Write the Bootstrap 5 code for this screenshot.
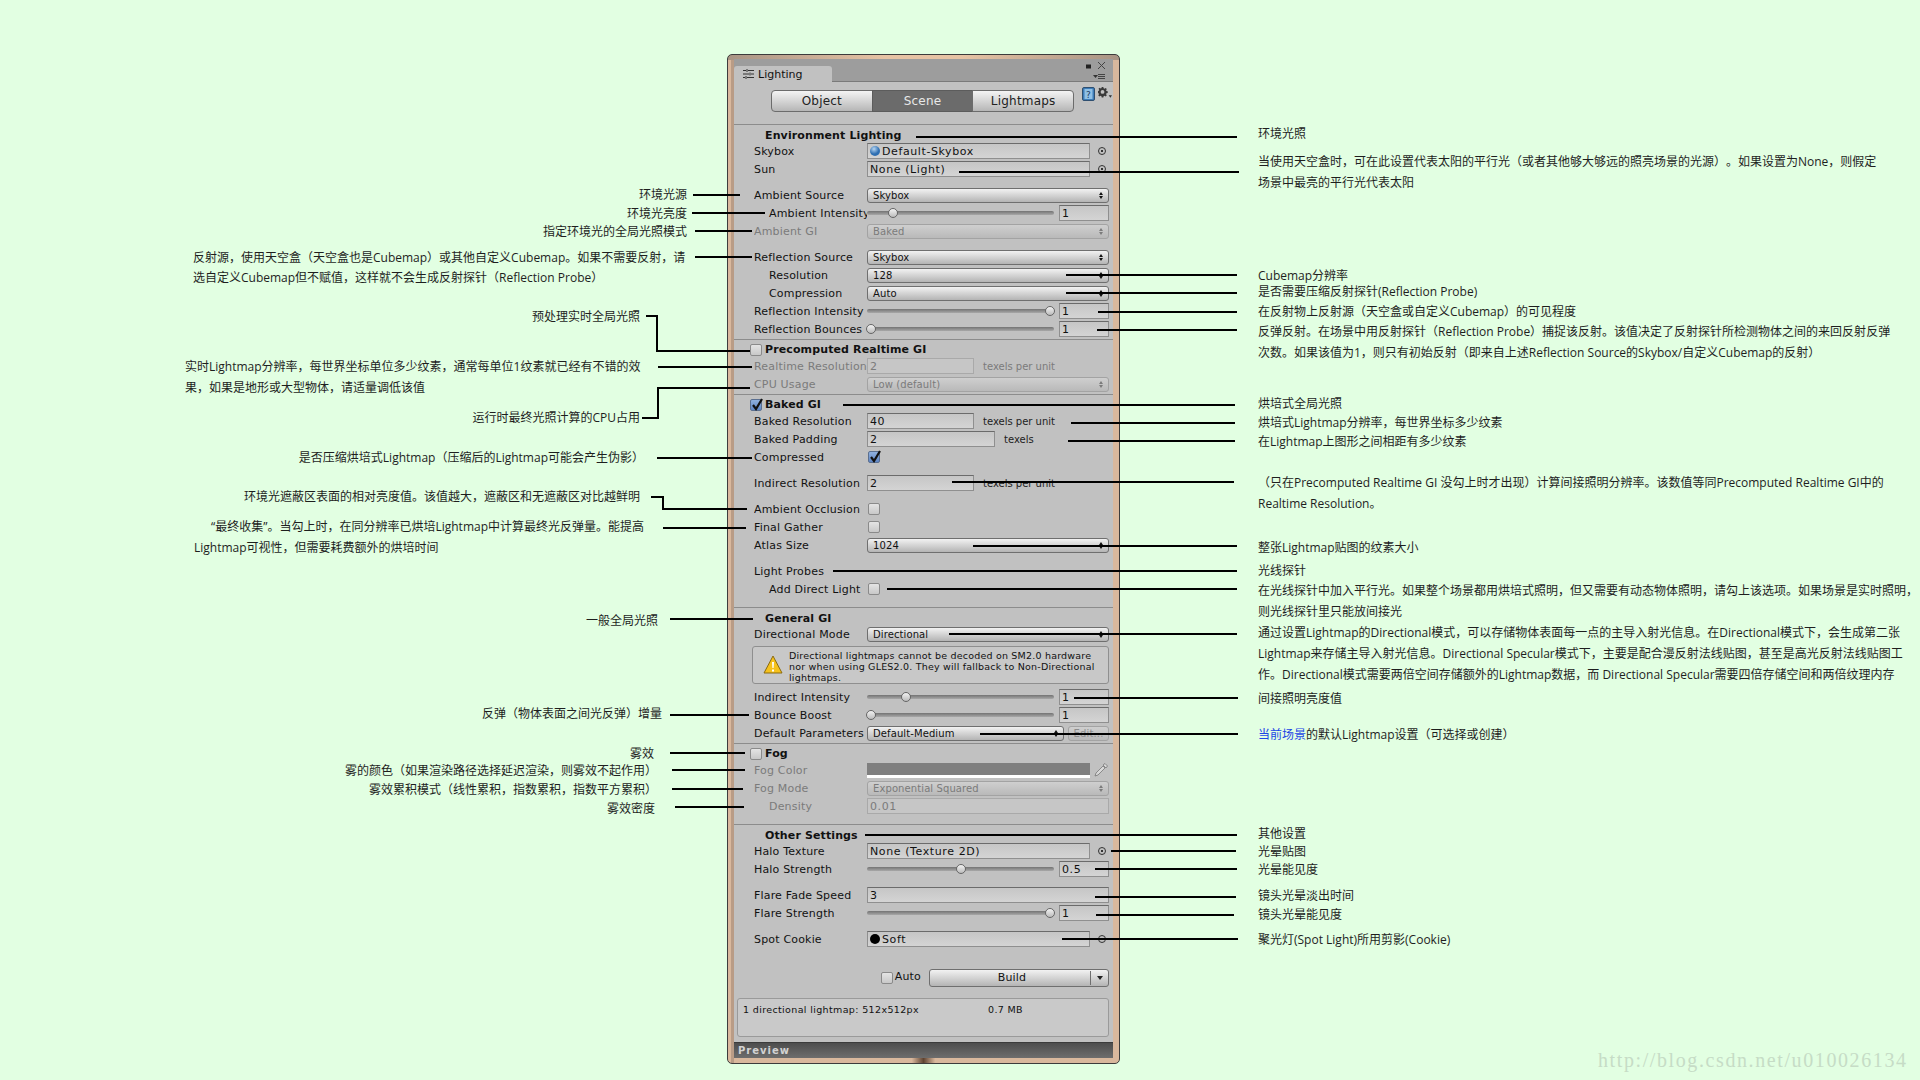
<!DOCTYPE html>
<html lang="zh">
<head>
<meta charset="utf-8">
<title>Lighting</title>
<link href="https://cdn.jsdelivr.net/npm/bootstrap@5.3.3/dist/css/bootstrap.min.css" rel="stylesheet">
<script src="https://cdn.jsdelivr.net/npm/bootstrap@5.3.3/dist/js/bootstrap.bundle.min.js"></script>
<style>
    html, body { height: 1080px; overflow: hidden; }
    body { background-color: #e2ffe2; font-family: "DejaVu Sans", sans-serif; color: #111; }
    .canvas { position: relative; width: 1920px; height: 1080px; padding: 54px 0 0 727px; }

    /* window */
    .lit-frame {
        width: 393px; height: 1010px; padding: 4px 7px 6px 7px;
        border: 1px solid #3c3c3c; border-radius: 5px;
        background:
            linear-gradient(90deg, transparent 47%, #5f4432 50%, transparent 53%) no-repeat bottom / 100% 5px,
            linear-gradient(90deg, #a89484, #e6c3a4 40%, #e6c3a4 60%, #a89484) no-repeat top / 100% 5px,
            linear-gradient(90deg, #d9b89d 0 3px, #b99c86 3px 6px, #d9b89d 6px);
    }
    .lit-panel { height: 999px; background: #c1c1c1; font-size: 11px; letter-spacing: .18px; white-space: nowrap; margin-left: -1px; margin-right: -1px; }
    .lit-tabbar { height: 23px; background: #9d9d9d; border-bottom: 1px solid #7a7a7a; padding-top: 7px; position: relative; }
    .lit-tab { width: 98px; height: 16px; background: #c1c1c1; border-radius: 3px 3px 0 0; gap: 4px; padding-left: 9px; line-height: 15px; letter-spacing: 0; }
    .win-ctrl { position: absolute; top: 2px; right: 4px; }
    .lit-toolbar { padding: 8px 0 0 37px; height: 42px; }
    .lit-toolbar .btn-group { width: 303px; height: 22px; }
    .lit-toolbar .btn {
        flex: 1 1 0; font-size: 12px; line-height: 20px; padding: 0; color: #222; letter-spacing: .2px;
        background: linear-gradient(#f4f4f4, #b6b6b6); border-color: #6c6c6c; border-radius: 4px;
    }
    .lit-toolbar .btn.on { background: #6b6b6b; color: #e8e8e8; border-color: #5c5c5c; }
    .tool-icons { margin: -3px 0 0 8px; gap: 3px; height: 15px; }
    .sep { height: 1px; background: #8c8c8c; margin-top: 1px; }
    .sep-gap { margin-top: 9px; }
    .head { height: 14px; line-height: 14px; font-weight: 700; padding: 1px 0 0 31px; margin-top: 3px; letter-spacing: .12px; }
    .head.chk { padding: 0 0 0 16px; gap: 3px; }
    .rw { height: 18px; padding: 0 4px 0 20px; }
    .rw-gap { margin-top: 8px; }
    .lbl { width: 113px; flex: none; overflow: hidden; padding-top: 2px; }
    .ind { padding-left: 15px; }
    .off { color: #7b7b7b; }

    /* widgets */
    .pop {
        flex: 1 1 0; height: 15px; line-height: 13px; font-size: 10px; letter-spacing: .1px; padding: 0 5px;
        border: 1px solid #6f6f6f; border-radius: 3px; background: linear-gradient(#f2f2f2, #b4b4b4);
    }
    .pop.off { border-color: #a3a3a3; background: linear-gradient(#cfcfcf, #b9b9b9); }
    .updown { width: 4px; height: 7px; flex: none; display: flex; flex-direction: column; gap: 1px; }
    .updown::before, .updown::after { content: ""; border-left: 2px solid transparent; border-right: 2px solid transparent; }
    .updown::before { border-bottom: 3px solid currentColor; }
    .updown::after { border-top: 3px solid currentColor; }
    .fld {
        height: 16px; line-height: 15px; padding: 0 2px; flex: none;
        border: 1px solid #8f8f8f; border-top-color: #6b6b6b;
        background: linear-gradient(#c6c6c6, #d4d4d4); letter-spacing: .6px;
    }
    .fld.off { border-color: #a9a9a9; background: #c6c6c6; }
    .w-short { width: 107px; }
    .w-pad { width: 128px; }
    .w-num { width: 50px; margin-left: 5px; }
    .w-full { width: 242px; }
    .obj { width: 223px; display: flex; align-items: center; gap: 2px; }
    .unit { font-size: 10px; letter-spacing: 0; margin-left: 9px; color: #222; }
    .unit.off { color: #7b7b7b; }
    .picker { width: 8px; height: 8px; border: 1px solid #333; border-radius: 50%; margin-left: 8px; flex: none; position: relative; }
    .picker::after { content: ""; position: absolute; left: 2px; top: 2px; width: 2px; height: 2px; background: #333; }
    .track { flex: 1 1 0; height: 4px; position: relative; border-radius: 2px; background: linear-gradient(#737373, #a8a8a8); }
    .thumb { position: absolute; top: -3px; width: 10px; height: 10px; margin-left: -5px; border: 1px solid #666; border-radius: 50%; background: linear-gradient(#f2f2f2, #bcbcbc); }
    .box { width: 12px; height: 12px; flex: none; border: 1px solid #8a8a8a; border-radius: 2px; background: linear-gradient(#e4e4e4, #c8c8c8); position: relative; }
    .box.tick { background: linear-gradient(#8fb0de, #5f86c4); border-color: #5a6f90; }
    .box svg { position: absolute; left: -1px; top: -3px; }
    .val-box { margin-left: 1px; }
    .help-box {
        height: 38px; margin: 3px 4px 4px 18px; padding: 3px 0 0 36px; position: relative;
        border: 1px solid #8f8f8f; border-radius: 3px; background: #c8c8c8;
        font-size: 9.5px; line-height: 11px; letter-spacing: .2px;
    }
    .help-box svg { position: absolute; left: 10px; top: 8px; }
    .fog-bar { width: 223px; height: 15px; flex: none; background: #7f7f7f; border-bottom: 3px solid #fff; margin-top: 1px; }
    .edit-btn { width: 41px; height: 15px; margin-left: 4px; flex: none; text-align: center; line-height: 13px; font-size: 10px; color: #8d8d8d; border: 1px solid #a3a3a3; border-radius: 3px; background: linear-gradient(#cfcfcf, #b9b9b9); }
    .build-row { margin-top: 21px; height: 18px; padding-right: 4px; }
    .auto-box { margin-right: 2px; }
    .auto-text { margin-top: -2px; }
    .build-btn { width: 180px; height: 18px; line-height: 16px; font-size: 11px; border: 1px solid #6f6f6f; border-radius: 3px; background: linear-gradient(#f2f2f2, #b4b4b4); text-align: center; }
    .build-btn .cap { flex: 1 1 0; padding-left: 4px; }
    .build-btn .drop { width: 18px; border-left: 1px solid #6f6f6f; height: 14px; }
    .drop-arrow { border-left: 3px solid transparent; border-right: 3px solid transparent; border-top: 4px solid #222; }
    .info-box { height: 39px; margin: 11px 4px 0 3px; padding: 5px 5px; border: 1px solid #9a9a9a; border-radius: 3px; background: #c9c9c9; font-size: 9.5px; line-height: 12px; letter-spacing: .36px; }
    .info-size { margin-left: 69px; }
    .preview-bar { height: 16px; margin-top: 5px; padding-left: 4px; border-top: 1px solid #3b3b3b; background: linear-gradient(#4d4d4d, #6d6d6d); color: #d2d2d2; font-size: 10px; font-weight: 700; letter-spacing: 1px; line-height: 16px; }

    /* callouts over the window */
    .leaders { position: absolute; left: 0; top: 0; pointer-events: none; }
    .leaders path { fill: none; stroke: #000; stroke-width: 2; }
    .note { position: absolute; font-family: "Open Sans", "Noto Sans CJK SC", sans-serif; font-size: 12px; line-height: 18px; color: #1e1e1e; white-space: nowrap; text-spacing-trim: space-all; }
    .note-link { color: #1c46e6; }
    .watermark { position: absolute; left: 1598px; top: 1047px; font-family: "Liberation Serif", serif; font-size: 20px; line-height: 26px; letter-spacing: 1.6px; color: #c6dcc6; white-space: nowrap; }
</style>
</head>
<body>
<div class="canvas">
    <div class="lit-frame">
        <div class="lit-panel">
            <div class="lit-tabbar">
                <div class="lit-tab d-flex align-items-center">
                    <svg width="11" height="10" viewBox="0 0 11 10"><path d="M0 1.500h3M5 1.500h6M0 5h6M8 5h3M0 8.500h2M4 8.500h7M4 0v3M7 3.500v3M3 7v3" stroke="#333" fill="none"/></svg>
                    <span>Lighting</span>
                </div>
                <div class="win-ctrl">
                    <svg width="26" height="21" viewBox="0 0 26 21"><path d="M3 3.500h5v4H3z M5 5h2v1H5z" fill="#222"/><path d="M15 1l7 7M22 1l-7 7" stroke="#444" fill="none"/><path d="M10 14h5l-2.500 3z" fill="#333"/><path d="M15 13.500h7M15 15.500h7M15 17.500h7" stroke="#444"/></svg>
                </div>
            </div>
            <div class="lit-toolbar d-flex align-items-start">
                <div class="btn-group" role="group">
                    <button type="button" class="btn">Object</button>
                    <button type="button" class="btn on">Scene</button>
                    <button type="button" class="btn">Lightmaps</button>
                </div>
                <div class="tool-icons d-flex">
                    <svg width="13" height="14" viewBox="0 0 13 14"><rect x=".5" y=".5" width="12" height="13" rx="1.500" fill="#3d7cb8" stroke="#2f4f70"/><rect x="2.500" y="2" width="8" height="10" fill="#8fc0e6"/><text x="6.500" y="10.500" font-size="9" font-family="DejaVu Sans" text-anchor="middle" fill="#1d3e60">?</text></svg>
                    <svg width="14" height="14" viewBox="0 0 17 17"><path fill="#3a3a3a" d="M4.500 0h2l.3 1.500 1.200.5 1.300-.9 1.400 1.400-.9 1.300.5 1.200 1.500.3v2l-1.500.3-.5 1.200.9 1.300-1.400 1.400-1.300-.9-1.200.5-.3 1.500h-2l-.3-1.500-1.200-.5-1.300.9-1.400-1.400.9-1.300-.5-1.200L-.500 7V5l1.500-.3.500-1.200-.9-1.300L2 .8l1.300.9 1-.5zM5.500 3.700a2.300 2.300 0 1 0 0 4.600 2.300 2.300 0 0 0 0-4.600z"/><path d="M13 10h4l-2 3z" fill="#333"/></svg>
                </div>
            </div>
            <div class="sep m-0"></div>

            <div class="head">Environment Lighting</div>
            <div class="rw d-flex align-items-center"><div class="lbl">Skybox</div><div class="fld obj">
                <svg width="10" height="10" viewBox="0 0 10 10"><defs><radialGradient id="sky" cx=".4" cy=".3"><stop offset="0" stop-color="#b7d6f2"/><stop offset="1" stop-color="#2f6fb2"/></radialGradient></defs><circle cx="5" cy="5" r="5" fill="url(#sky)"/></svg><span>Default-Skybox</span></div><span class="picker"></span></div>
            <div class="rw d-flex align-items-center"><div class="lbl">Sun</div><div class="fld obj">None (Light)</div><span class="picker"></span></div>

            <div class="rw rw-gap d-flex align-items-center"><div class="lbl">Ambient Source</div><div class="pop d-flex align-items-center justify-content-between"><span>Skybox</span><span class="updown"></span></div></div>
            <div class="rw d-flex align-items-center"><div class="lbl ind">Ambient Intensity</div><div class="track"><span class="thumb" style="left:14%"></span></div><div class="fld w-num">1</div></div>
            <div class="rw d-flex align-items-center"><div class="lbl off">Ambient GI</div><div class="pop off d-flex align-items-center justify-content-between"><span>Baked</span><span class="updown"></span></div></div>

            <div class="rw rw-gap d-flex align-items-center"><div class="lbl">Reflection Source</div><div class="pop d-flex align-items-center justify-content-between"><span>Skybox</span><span class="updown"></span></div></div>
            <div class="rw d-flex align-items-center"><div class="lbl ind">Resolution</div><div class="pop d-flex align-items-center justify-content-between"><span>128</span><span class="updown"></span></div></div>
            <div class="rw d-flex align-items-center"><div class="lbl ind">Compression</div><div class="pop d-flex align-items-center justify-content-between"><span>Auto</span><span class="updown"></span></div></div>
            <div class="rw d-flex align-items-center"><div class="lbl">Reflection Intensity</div><div class="track"><span class="thumb" style="left:98%"></span></div><div class="fld w-num">1</div></div>
            <div class="rw d-flex align-items-center"><div class="lbl">Reflection Bounces</div><div class="track"><span class="thumb" style="left:2%"></span></div><div class="fld w-num">1</div></div>
            <div class="sep"></div>

            <div class="head chk d-flex align-items-center"><span class="box"></span><span>Precomputed Realtime GI</span></div>
            <div class="rw d-flex align-items-center off"><div class="lbl">Realtime Resolution</div><div class="fld off w-short">2</div><span class="unit off">texels per unit</span></div>
            <div class="rw d-flex align-items-center off"><div class="lbl">CPU Usage</div><div class="pop off d-flex align-items-center justify-content-between"><span>Low (default)</span><span class="updown"></span></div></div>
            <div class="sep"></div>

            <div class="head chk d-flex align-items-center"><span class="box tick"><svg width="15" height="15" viewBox="0 0 15 15"><path d="M3 8l3 4 6-10" fill="none" stroke="#111" stroke-width="2.200"/></svg></span><span>Baked GI</span></div>
            <div class="rw d-flex align-items-center"><div class="lbl">Baked Resolution</div><div class="fld w-short">40</div><span class="unit">texels per unit</span></div>
            <div class="rw d-flex align-items-center"><div class="lbl">Baked Padding</div><div class="fld w-pad">2</div><span class="unit">texels</span></div>
            <div class="rw d-flex align-items-center"><div class="lbl">Compressed</div><span class="box tick val-box"><svg width="15" height="15" viewBox="0 0 15 15"><path d="M3 8l3 4 6-10" fill="none" stroke="#111" stroke-width="2.200"/></svg></span></div>

            <div class="rw rw-gap d-flex align-items-center"><div class="lbl">Indirect Resolution</div><div class="fld w-short">2</div><span class="unit">texels per unit</span></div>

            <div class="rw rw-gap d-flex align-items-center"><div class="lbl">Ambient Occlusion</div><span class="box val-box"></span></div>
            <div class="rw d-flex align-items-center"><div class="lbl">Final Gather</div><span class="box val-box"></span></div>
            <div class="rw d-flex align-items-center"><div class="lbl">Atlas Size</div><div class="pop d-flex align-items-center justify-content-between"><span>1024</span><span class="updown"></span></div></div>

            <div class="rw rw-gap d-flex align-items-center"><div class="lbl">Light Probes</div></div>
            <div class="rw d-flex align-items-center"><div class="lbl ind">Add Direct Light</div><span class="box val-box"></span></div>
            <div class="sep sep-gap"></div>

            <div class="head">General GI</div>
            <div class="rw d-flex align-items-center"><div class="lbl">Directional Mode</div><div class="pop d-flex align-items-center justify-content-between"><span>Directional</span><span class="updown"></span></div></div>
            <div class="help-box">
                <svg width="20" height="20" viewBox="0 0 20 20"><path d="M10 1l9 17H1z" fill="#f6c21c" stroke="#8a6a10"/><path d="M9 7h2l-.4 6h-1.200zM9 14.500h2v2H9z" fill="#fff"/></svg>
                Directional lightmaps cannot be decoded on SM2.0 hardware<br>nor when using GLES2.0. They will fallback to Non-Directional<br>lightmaps.
            </div>
            <div class="rw d-flex align-items-center"><div class="lbl">Indirect Intensity</div><div class="track"><span class="thumb" style="left:21%"></span></div><div class="fld w-num">1</div></div>
            <div class="rw d-flex align-items-center"><div class="lbl">Bounce Boost</div><div class="track"><span class="thumb" style="left:2%"></span></div><div class="fld w-num">1</div></div>
            <div class="rw d-flex align-items-center"><div class="lbl">Default Parameters</div><div class="pop d-flex align-items-center justify-content-between"><span>Default-Medium</span><span class="updown"></span></div><div class="edit-btn">Edit...</div></div>
            <div class="sep"></div>

            <div class="head chk d-flex align-items-center"><span class="box"></span><span>Fog</span></div>
            <div class="rw d-flex align-items-center"><div class="lbl off">Fog Color</div><div class="fog-bar"></div>
                <svg class="ms-1" width="14" height="14" viewBox="0 0 14 14"><path d="M1 13l1-3 7-7 2 2-7 7zM9 2l2-1.500 2.500 2.500L12 5z" fill="#d8d8d8" stroke="#777" stroke-width=".8"/></svg></div>
            <div class="rw d-flex align-items-center"><div class="lbl off">Fog Mode</div><div class="pop off d-flex align-items-center justify-content-between"><span>Exponential Squared</span><span class="updown"></span></div></div>
            <div class="rw d-flex align-items-center"><div class="lbl off ind">Density</div><div class="fld off w-full">0.01</div></div>
            <div class="sep sep-gap"></div>

            <div class="head">Other Settings</div>
            <div class="rw d-flex align-items-center"><div class="lbl">Halo Texture</div><div class="fld obj">None (Texture 2D)</div><span class="picker"></span></div>
            <div class="rw d-flex align-items-center"><div class="lbl">Halo Strength</div><div class="track"><span class="thumb" style="left:50%"></span></div><div class="fld w-num">0.5</div></div>
            <div class="rw rw-gap d-flex align-items-center"><div class="lbl">Flare Fade Speed</div><div class="fld w-full">3</div></div>
            <div class="rw d-flex align-items-center"><div class="lbl">Flare Strength</div><div class="track"><span class="thumb" style="left:98%"></span></div><div class="fld w-num">1</div></div>
            <div class="rw rw-gap d-flex align-items-center"><div class="lbl">Spot Cookie</div><div class="fld obj"><svg width="10" height="10" viewBox="0 0 10 10"><circle cx="5" cy="5" r="5" fill="#000"/></svg><span>Soft</span></div><span class="picker"></span></div>

            <div class="build-row d-flex justify-content-end align-items-center">
                <span class="box auto-box"></span><span class="auto-text">Auto</span>
                <div class="build-btn d-flex align-items-center ms-2"><span class="cap">Build</span><span class="drop d-flex align-items-center justify-content-center"><span class="drop-arrow"></span></span></div>
            </div>
            <div class="info-box"><span>1 directional lightmap: 512x512px</span><span class="info-size">0.7 MB</span></div>
            <div class="preview-bar">Preview</div>
        </div>
    </div>

    <svg class="leaders" width="1920" height="1080" viewBox="0 0 1920 1080" shape-rendering="crispEdges">
        <!-- left side -->
        <path d="M693 195H740"/><path d="M692 213H765"/><path d="M695 231H752"/><path d="M695 257H752"/>
        <path d="M646 316H657V351H750"/><path d="M658 367H752"/><path d="M642 418H658V388H750"/><path d="M657 458H752"/>
        <path d="M651 497H663V509H747"/><path d="M663 528H746"/><path d="M670 619H753"/><path d="M670 715H749"/>
        <path d="M670 753H745"/><path d="M672 770H745"/><path d="M672 789H743"/><path d="M675 807H744"/>
        <!-- right side -->
        <path d="M916 137H1237"/><path d="M959 172H1239"/><path d="M1066 275H1237"/><path d="M1066 293H1237"/>
        <path d="M1098 312H1237"/><path d="M1097 330H1237"/><path d="M843 405H1235"/><path d="M1071 423H1235"/>
        <path d="M1068 441H1235"/><path d="M952 482H1234"/><path d="M973 546H1237"/><path d="M833 571H1237"/>
        <path d="M887 589H1237"/><path d="M949 634H1237"/><path d="M1074 698H1238"/><path d="M980 734H1238"/>
        <path d="M865 835H1237"/><path d="M1111 851H1236"/><path d="M1095 869H1237"/><path d="M1095 897H1236"/>
        <path d="M1096 915H1234"/><path d="M1062 939H1238"/>
    </svg>

    <div id="notes"></div>
    <div class="watermark">http://blog.csdn.net/u010026134</div>
</div>
<script>
    // r = right edge of the text, x = left edge, y = vertical centre
    const notes = [
        { r: 687, y: 194, t: "环境光源" },
        { r: 687, y: 213, t: "环境光亮度" },
        { r: 687, y: 231, t: "指定环境光的全局光照模式" },
        { x: 193, y: 257, t: "反射源，使用天空盒（天空盒也是Cubemap）或其他自定义Cubemap。如果不需要反射，请" },
        { x: 193, y: 277, t: "选自定义Cubemap但不赋值，这样就不会生成反射探针（Reflection Probe）" },
        { r: 640, y: 316, t: "预处理实时全局光照" },
        { x: 185, y: 366, t: "实时Lightmap分辨率，每世界坐标单位多少纹素，通常每单位1纹素就已经有不错的效" },
        { x: 185, y: 387, t: "果，如果是地形或大型物体，请适量调低该值" },
        { r: 640, y: 417, t: "运行时最终光照计算的CPU占用" },
        { r: 644, y: 457, t: "是否压缩烘培式Lightmap（压缩后的Lightmap可能会产生伪影）" },
        { r: 640, y: 496, t: "环境光遮蔽区表面的相对亮度值。该值越大，遮蔽区和无遮蔽区对比越鲜明" },
        { r: 644, y: 526, t: "“最终收集”。当勾上时，在同分辨率已烘培Lightmap中计算最终光反弹量。能提高" },
        { x: 194, y: 547, t: "Lightmap可视性，但需要耗费额外的烘培时间" },
        { r: 658, y: 620, t: "一般全局光照" },
        { r: 662, y: 713, t: "反弹（物体表面之间光反弹）增量" },
        { r: 654, y: 753, t: "雾效" },
        { r: 657, y: 770, t: "雾的颜色（如果渲染路径选择延迟渲染，则雾效不起作用）" },
        { r: 657, y: 789, t: "雾效累积模式（线性累积，指数累积，指数平方累积）" },
        { r: 655, y: 808, t: "雾效密度" },

        { x: 1258, y: 133, t: "环境光照" },
        { x: 1258, y: 161, t: "当使用天空盒时，可在此设置代表太阳的平行光（或者其他够大够远的照亮场景的光源）。如果设置为None，则假定" },
        { x: 1258, y: 182, t: "场景中最亮的平行光代表太阳" },
        { x: 1258, y: 275, t: "Cubemap分辨率" },
        { x: 1258, y: 291, t: "是否需要压缩反射探针(Reflection Probe)" },
        { x: 1258, y: 311, t: "在反射物上反射源（天空盒或自定义Cubemap）的可见程度" },
        { x: 1258, y: 331, t: "反弹反射。在场景中用反射探针（Reflection Probe）捕捉该反射。该值决定了反射探针所检测物体之间的来回反射反弹" },
        { x: 1258, y: 352, t: "次数。如果该值为1，则只有初始反射（即来自上述Reflection Source的Skybox/自定义Cubemap的反射）" },
        { x: 1258, y: 403, t: "烘培式全局光照" },
        { x: 1258, y: 422, t: "烘培式Lightmap分辨率，每世界坐标多少纹素" },
        { x: 1258, y: 441, t: "在Lightmap上图形之间相距有多少纹素" },
        { x: 1258, y: 482, t: "（只在Precomputed Realtime GI 没勾上时才出现）计算间接照明分辨率。该数值等同Precomputed Realtime GI中的" },
        { x: 1258, y: 503, t: "Realtime Resolution。" },
        { x: 1258, y: 547, t: "整张Lightmap贴图的纹素大小" },
        { x: 1258, y: 570, t: "光线探针" },
        { x: 1258, y: 590, t: "在光线探针中加入平行光。如果整个场景都用烘培式照明，但又需要有动态物体照明，请勾上该选项。如果场景是实时照明，" },
        { x: 1258, y: 611, t: "则光线探针里只能放间接光" },
        { x: 1258, y: 632, t: "通过设置Lightmap的Directional模式，可以存储物体表面每一点的主导入射光信息。在Directional模式下，会生成第二张" },
        { x: 1258, y: 653, t: "Lightmap来存储主导入射光信息。Directional Specular模式下，主要是配合漫反射法线贴图，甚至是高光反射法线贴图工" },
        { x: 1258, y: 674, t: "作。Directional模式需要两倍空间存储额外的Lightmap数据，而 Directional Specular需要四倍存储空间和两倍纹理内存" },
        { x: 1258, y: 698, t: "间接照明亮度值" },
        { x: 1258, y: 734, t: "<span class='note-link'>当前场景</span>的默认Lightmap设置（可选择或创建）" },
        { x: 1258, y: 833, t: "其他设置" },
        { x: 1258, y: 851, t: "光晕贴图" },
        { x: 1258, y: 869, t: "光晕能见度" },
        { x: 1258, y: 895, t: "镜头光晕淡出时间" },
        { x: 1258, y: 914, t: "镜头光晕能见度" },
        { x: 1258, y: 939, t: "聚光灯(Spot Light)所用剪影(Cookie)" }
    ];
    let notesHTML = "";
    for (let i = 0; i < notes.length; i++) {
        let n = notes[i];
        let side = n.r ? `right:${1920 - n.r}px` : `left:${n.x}px`;
        notesHTML += `<div class="note" style="${side};top:${n.y - 8}px">${n.t}</div>`;
    }
    document.getElementById("notes").innerHTML = notesHTML;
</script>
</body>
</html>
